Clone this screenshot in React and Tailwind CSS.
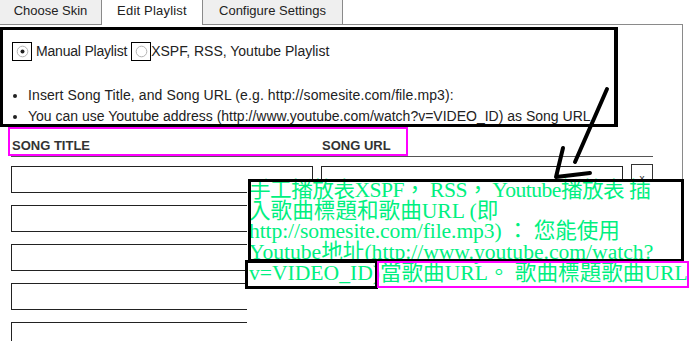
import React from "react";

const rows = [0, 1, 2, 3, 4];

function Radio({ checked }) {
  return (
    <span className="flex h-[19px] w-[20px] items-center justify-center border border-black bg-white">
      <svg width="13" height="13" viewBox="0 0 13 13">
        <circle cx="6.5" cy="6.5" r="5.3" fill="white" stroke="#b4b4b4" strokeWidth="1" />
        {checked && <circle cx="6.5" cy="6.5" r="2" fill="#222" />}
      </svg>
    </span>
  );
}

function Tabs() {
  return (
    <div className="flex h-[25px] w-[683px]">
      <div className="flex h-[25px] w-[102px] items-center justify-center border-b border-r border-[#8a8a8a] bg-[#efefef] pb-[3px]">
        Choose Skin
      </div>
      <div className="flex h-[25px] w-[101px] items-center justify-center border-r border-[#8a8a8a] bg-white pb-[4px] tracking-[0.2px]">
        Edit Playlist
      </div>
      <div className="flex h-[25px] w-[140px] items-center justify-center border-b border-r border-[#8a8a8a] bg-[#efefef] pb-[3px]">
        Configure Settings
      </div>
      <div className="h-[25px] flex-1 border-b border-[#8a8a8a]" />
    </div>
  );
}

function PlaylistPanel() {
  return (
    <div className="h-[316px] w-[683px] overflow-hidden border-r border-[#8a8a8a]">
      <div className="mt-[16px] flex h-[20px] items-center pl-[12px] text-[14px]">
        <Radio checked />
        <span className="ml-[4px] tracking-[-0.2px]">Manual Playlist</span>
        <span className="ml-[4px]">
          <Radio />
        </span>
        <span>XSPF, RSS, Youtube Playlist</span>
      </div>

      <ul className="mt-[24px] text-[14px]">
        <li className="flex h-[21px] items-center pl-[13px]">
          <span className="h-[4px] w-[4px] rounded-full bg-[#222]" />
          <span className="ml-[11px] tracking-[0.1px]">Insert Song Title, and Song URL (e.g. http://somesite.com/file.mp3):</span>
        </li>
        <li className="flex h-[21px] items-center pl-[13px]">
          <span className="h-[4px] w-[4px] rounded-full bg-[#222]" />
          <span className="ml-[11px]">You can use Youtube address (http://www.youtube.com/watch?v=VIDEO_ID) as Song URL</span>
        </li>
      </ul>

      <div className="ml-[11px] mt-[7px] flex h-[23px] w-[642px] items-center border-b border-[#555] pt-[1px] font-bold text-[#333]">
        <span className="w-[311px] pl-[1px]">SONG TITLE</span>
        <span>SONG URL</span>
      </div>

      <div className="ml-[11px] mt-[9px] flex flex-col gap-[12px]">
        {rows.map((r) => (
          <div key={r} className="flex h-[27px] gap-[8px]">
            <input className="h-[27px] w-[302px] border border-[#222] bg-white" />
            <input className="h-[27px] w-[302px] border border-[#222] bg-white" />
            <button className="-mt-[2px] flex h-[29px] w-[22px] items-center justify-center border border-[#333] bg-white text-[10px] text-[#333]">
              x
            </button>
          </div>
        ))}
      </div>
    </div>
  );
}

function Annotations() {
  const cn = "font-['Liberation_Serif','Noto_Sans_CJK_TC',serif]";
  return (
    <>
      {/* big black box round the options */}
      <div className="pointer-events-none absolute left-0 top-[27px] h-[100px] w-[618px] border-[3px] border-r-4 border-black" />
      {/* magenta box round the headings */}
      <div className="pointer-events-none absolute left-[8px] top-[127px] h-[29px] w-[400px] border-2 border-[#ff00ff]" />

      {/* translation overlay */}
      <div className="absolute left-[247px] top-[179px] h-[162px] w-[442px] bg-white" />
      <div className={`absolute left-[249px] top-[180px] whitespace-nowrap text-[21.6px] leading-[20.7px] text-[#00f080] ${cn}`}>
        <div className="tracking-[-0.5px]">手工播放表XSPF， RSS， Youtube播放表 插</div>
        <div>入歌曲標題和歌曲URL (即</div>
        <div className="tracking-[-0.1px]">http://somesite.com/file.mp3) ： 您能使用</div>
        <div>Youtube地址(http://www.youtube.com/watch?</div>
        <div>v=VIDEO_ID)當歌曲URL。 歌曲標題歌曲URL</div>
      </div>
      <div className="pointer-events-none absolute left-[248px] top-[179px] h-[83px] w-[436px] border-[3px] border-black" />
      <div className="pointer-events-none absolute left-[245px] top-[260px] h-[29px] w-[133px] border-[3px] border-black" />
      <div className="pointer-events-none absolute left-[377px] top-[261px] h-[27px] w-[312px] border-2 border-[#ff00ff]" />

      {/* hand drawn arrow */}
      <svg className="pointer-events-none absolute left-0 top-0" width="689" height="341" viewBox="0 0 689 341">
        <path d="M607 89 L575 162" stroke="black" strokeWidth="4" strokeLinecap="round" fill="none" />
        <path d="M563 148 L556 177 L590 173" stroke="black" strokeWidth="4" strokeLinecap="round" strokeLinejoin="round" fill="none" />
      </svg>
    </>
  );
}

export default function App() {
  return (
    <div className="relative h-[341px] w-[689px] overflow-hidden bg-white font-['Liberation_Sans',Arial,sans-serif] text-[13px] text-[#222]">
      <Tabs />
      <PlaylistPanel />
      <Annotations />
    </div>
  );
}
